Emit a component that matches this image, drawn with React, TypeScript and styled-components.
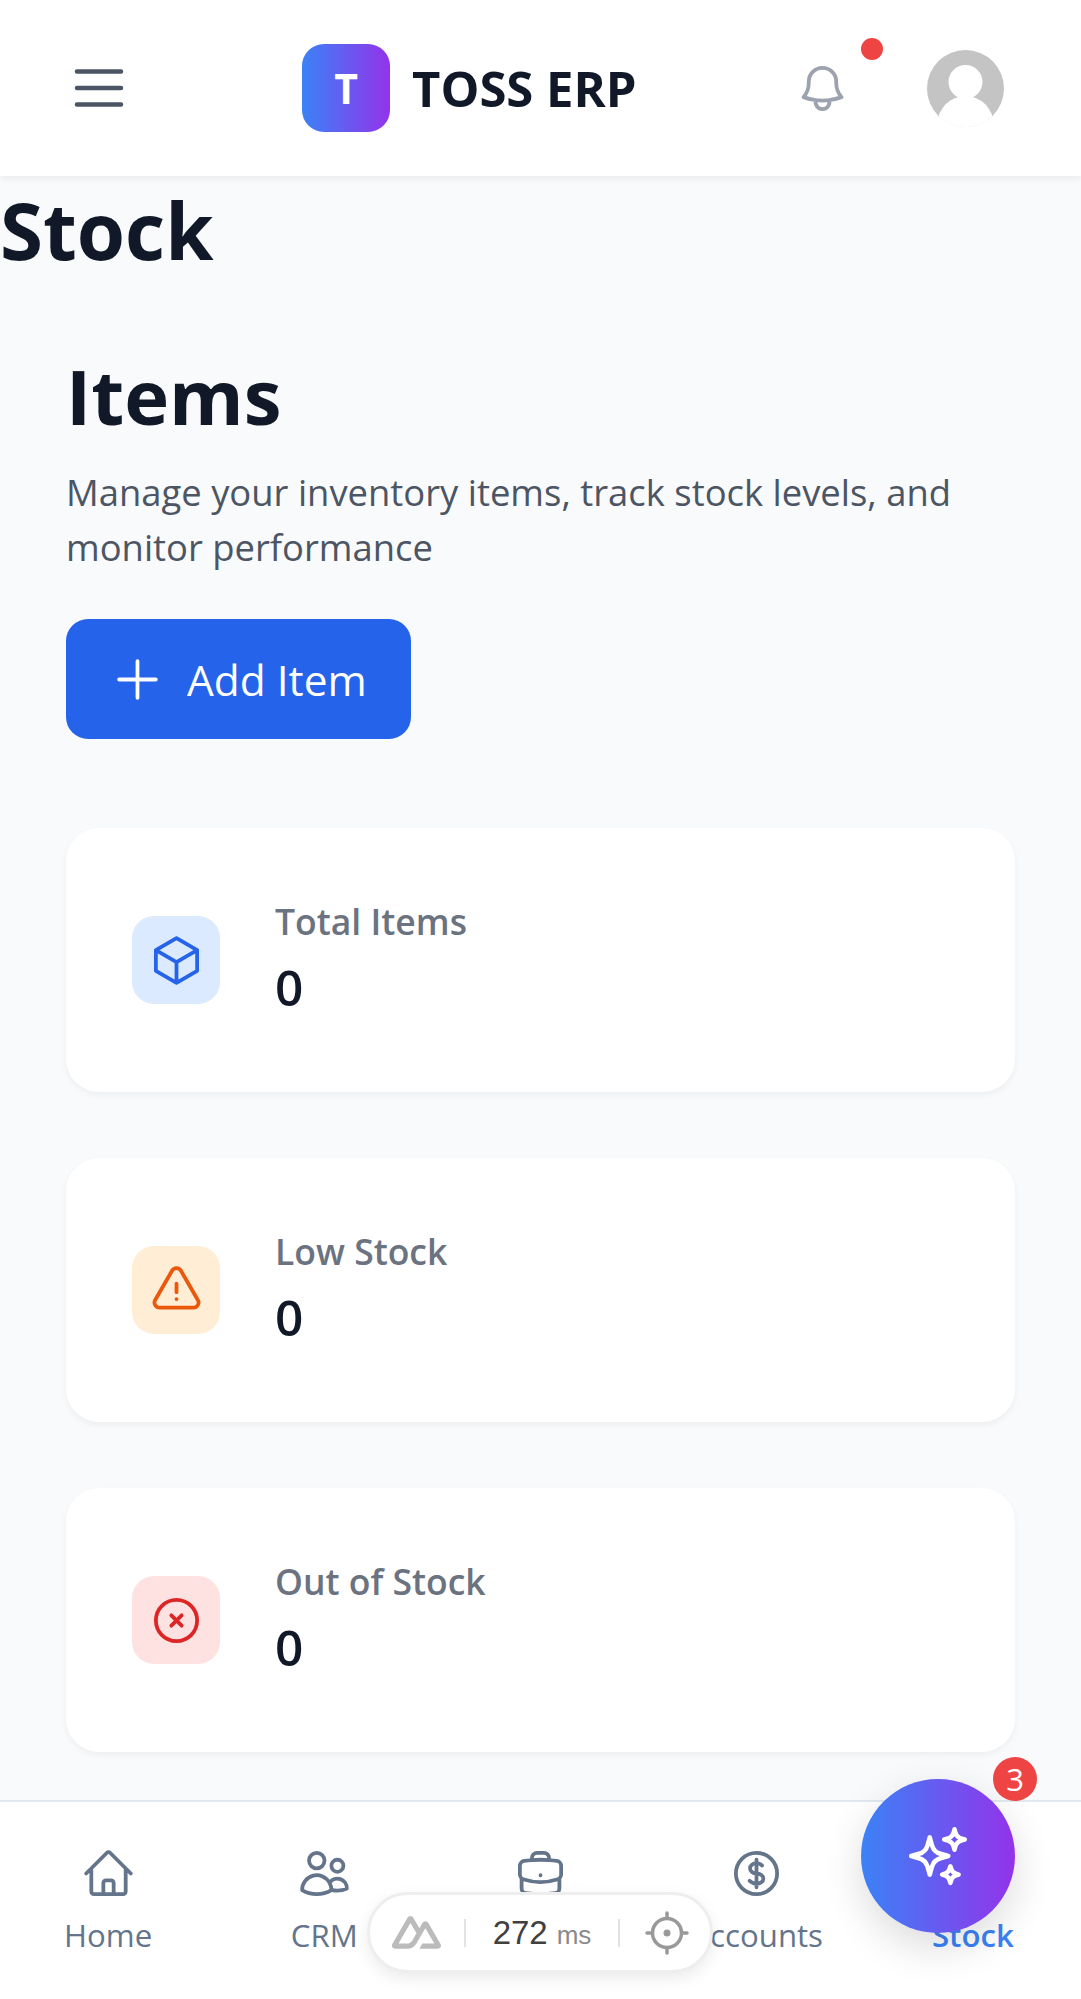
import React from 'react';
import styled, {createGlobalStyle} from 'styled-components';

const GlobalStyle = createGlobalStyle`
  html, body {
    margin: 0;
    padding: 0;
    background: #f9fafb;
  }

  * {
    box-sizing: border-box;
  }
`

const Page = styled.div`
  display: flex;
  flex-direction: column;
  height: 100vh;
  overflow: hidden;
  position: relative;
  background: #f9fafb;
  font-family: "Open Sans", "Noto Sans", sans-serif;
`

const Header = styled.header`
  display: flex;
  align-items: center;
  flex: none;
  height: 176px;
  padding: 0 77px 0 66px;
  background: #ffffff;
  box-shadow: 0 3px 6px rgba(0, 0, 0, 0.06);
  position: relative;
`

const MenuIcon = styled.svg`
  width: 66px;
  height: 66px;
  color: #4b5563;
`

const Brand = styled.div`
  display: flex;
  align-items: center;
  gap: 22px;
  margin-left: 170px;
`

const LogoBox = styled.div`
  display: flex;
  align-items: center;
  justify-content: center;
  width: 88px;
  height: 88px;
  border-radius: 22px;
  background: linear-gradient(to right, #3b82f6, #9333ea);
  color: #ffffff;
  font-size: 41px;
  font-weight: 700;
`

const BrandName = styled.span`
  font-size: 49px;
  font-weight: 700;
  color: #111827;
  white-space: nowrap;
`

const HeaderActions = styled.div`
  display: flex;
  align-items: center;
  gap: 77px;
  margin-left: auto;
`

const BellButton = styled.div`
  position: relative;
  display: flex;
  width: 55px;
  height: 55px;
  color: #9ca3af;
`

const Dot = styled.span`
  position: absolute;
  top: -23px;
  right: -33px;
  width: 22px;
  height: 22px;
  border-radius: 50%;
  background: #ef4444;
`

const Avatar = styled.svg`
  display: block;
  width: 77px;
  height: 77px;
`

const PageTitle = styled.h1`
  margin: 0;
  padding-top: 5px;
  font-size: 78px;
  line-height: 99px;
  font-weight: 700;
  color: #111827;
`

const Content = styled.main`
  flex: 1;
  min-height: 0;
  padding: 66px 66px 0;
`

const SectionTitle = styled.h2`
  margin: 0 0 20px;
  font-size: 76px;
  line-height: 99px;
  font-weight: 700;
  color: #111827;
`

const Description = styled.p`
  margin: 0 0 44px;
  font-size: 36.4px;
  line-height: 55px;
  color: #4b5563;
`

const AddButton = styled.button`
  display: flex;
  align-items: center;
  gap: 22px;
  height: 120px;
  padding: 0 44px;
  margin-bottom: 89px;
  border: 0;
  border-radius: 22px;
  background: #2563eb;
  color: #ffffff;
  font-family: inherit;
  font-size: 42.4px;
`

const CardList = styled.div`
  display: flex;
  flex-direction: column;
  gap: 66px;
`

const Card = styled.div`
  display: flex;
  align-items: center;
  gap: 55px;
  padding: 66px;
  border-radius: 33px;
  background: #ffffff;
  box-shadow: 0 3px 6px rgba(0, 0, 0, 0.05);
`

const CardIcon = styled('div')<{ $bg: string; $fg: string }>`
  display: flex;
  align-items: center;
  justify-content: center;
  flex: none;
  width: 88px;
  height: 88px;
  border-radius: 22px;
  background: ${({$bg}) => $bg};
  color: ${({$fg}) => $fg};
`

const CardLabel = styled.div`
  font-size: 35.5px;
  line-height: 55px;
  font-weight: 600;
  color: #6b7280;
`

const CardValue = styled.div`
  font-size: 49.5px;
  line-height: 77px;
  font-weight: 600;
  color: #111827;
`

const BottomNav = styled.nav`
  display: grid;
  grid-template-columns: repeat(5, 1fr);
  flex: none;
  height: 199px;
  padding-top: 44px;
  background: #ffffff;
  border-top: 2px solid #e2e8f0;
`

const NavItem = styled('div')<{ $active?: boolean }>`
  display: flex;
  flex-direction: column;
  align-items: center;
  gap: 12px;
  color: ${({$active}) => ($active ? '#3b82f6' : '#64748b')};
  font-size: 31.2px;
  line-height: 44px;
  font-weight: ${({$active}) => ($active ? 600 : 400)};
`

const NavIcon = styled.svg`
  width: 55px;
  height: 55px;
  color: #64748b;
`

const Fab = styled.div`
  position: absolute;
  right: 66px;
  bottom: 66px;
  display: flex;
  align-items: center;
  justify-content: center;
  width: 154px;
  height: 154px;
  border-radius: 50%;
  background: linear-gradient(to right, #3b82f6, #9333ea);
  color: #ffffff;
  box-shadow: 0 14px 40px rgba(0, 0, 0, 0.14);
`

const FabBadge = styled.span`
  position: absolute;
  top: -22px;
  right: -22px;
  display: flex;
  align-items: center;
  justify-content: center;
  width: 44px;
  height: 44px;
  border-radius: 50%;
  background: #ef4444;
  color: #ffffff;
  font-size: 31px;
`

const DevPill = styled.div`
  position: absolute;
  left: 367px;
  bottom: 26px;
  display: flex;
  align-items: center;
  width: 346px;
  height: 81px;
  padding: 0 22px;
  border: 3px solid #eeeeee;
  border-radius: 41px;
  background: #ffffff;
  box-shadow: 0 6px 16px rgba(0, 0, 0, 0.08);
  font-family: "Liberation Sans", Arial, sans-serif;
`

const DevLogo = styled.svg`
  flex: none;
  width: 49px;
  height: 33px;
  margin-right: 23px;
`

const DevDivider = styled.span`
  flex: none;
  width: 2px;
  height: 28px;
  background: #e2e2e2;
`

const DevMs = styled.div`
  flex: none;
  width: 152px;
  text-align: center;
  font-size: 33px;
  color: #404040;

  small {
    margin-left: 9px;
    font-size: 26px;
    color: #8a8a8a;
  }
`

const DevTarget = styled.svg`
  flex: none;
  width: 44px;
  height: 44px;
  margin-left: 25px;
`

const Outline: React.FC<{ d: string; size?: number; width?: number }> = ({d, size = 55, width = 1.65}) => (
    <svg width={size} height={size} viewBox="0 0 24 24" fill="none" stroke="currentColor" strokeWidth={width}
         strokeLinecap="round" strokeLinejoin="round">
        <path d={d}/>
    </svg>
)

const NAV_PATHS: { label: string; d: string; active?: boolean }[] = [
    {
        label: 'Home',
        d: 'M2.25 12l8.954-8.955c.44-.439 1.152-.439 1.591 0L21.75 12M4.5 9.75v10.125c0 .621.504 1.125 1.125 1.125H9.75v-4.875c0-.621.504-1.125 1.125-1.125h2.25c.621 0 1.125.504 1.125 1.125V21h4.125c.621 0 1.125-.504 1.125-1.125V9.75M8.25 21h8.25',
    },
    {
        label: 'CRM',
        d: 'M15 19.128a9.38 9.38 0 002.625.372 9.337 9.337 0 004.121-.952 4.125 4.125 0 00-7.533-2.493M15 19.128v-.003c0-1.113-.285-2.16-.786-3.07M15 19.128v.106A12.318 12.318 0 018.624 21c-2.331 0-4.512-.645-6.374-1.766l-.001-.109a6.375 6.375 0 0111.964-3.07M12 6.375a3.375 3.375 0 11-6.75 0 3.375 3.375 0 016.75 0zm8.25 2.25a2.625 2.625 0 11-5.25 0 2.625 2.625 0 015.25 0z',
    },
    {
        label: 'Business',
        d: 'M20.25 14.15v4.25c0 1.094-.787 2.036-1.872 2.18-2.087.277-4.216.42-6.378.42s-4.291-.143-6.378-.42c-1.085-.144-1.872-1.086-1.872-2.18v-4.25m16.5 0a2.18 2.18 0 00.75-1.661V8.706c0-1.081-.768-2.015-1.837-2.175a48.114 48.114 0 00-3.413-.387m4.5 8.006c-.194.165-.42.295-.673.38A23.978 23.978 0 0112 15.75c-2.648 0-5.195-.429-7.577-1.22a2.016 2.016 0 01-.673-.38m0 0A2.18 2.18 0 013 12.489V8.706c0-1.081.768-2.015 1.837-2.175a48.111 48.111 0 013.413-.387m7.5 0V5.25A2.25 2.25 0 0013.5 3h-3a2.25 2.25 0 00-2.25 2.25v.894m7.5 0a48.667 48.667 0 00-7.5 0M12 12.75h.008v.008H12v-.008z',
    },
    {
        label: 'Accounts',
        d: 'M12 6v12m-3-2.818l.879.659c1.171.879 3.07.879 4.242 0 1.172-.879 1.172-2.303 0-3.182C13.536 12.219 12.768 12 12 12c-.725 0-1.45-.22-2.003-.659-1.106-.879-1.106-2.303 0-3.182s2.9-.879 4.006 0l.415.33M21 12a9 9 0 11-18 0 9 9 0 0118 0z',
    },
    {
        label: 'Stock',
        d: 'M21 7.5l-9-5.25L3 7.5m18 0l-9 5.25m9-5.25v9l-9 5.25M3 7.5l9 5.25M3 7.5v9l9 5.25m0-9v9',
        active: true,
    },
]

const STATS = [
    {
        label: 'Total Items',
        bg: '#dbeafe',
        fg: '#2563eb',
        d: 'M21 7.5l-9-5.25L3 7.5m18 0l-9 5.25m9-5.25v9l-9 5.25M3 7.5l9 5.25M3 7.5v9l9 5.25m0-9v9',
    },
    {
        label: 'Low Stock',
        bg: '#ffedd5',
        fg: '#ea580c',
        d: 'M12 9v3.75m-9.303 3.376c-.866 1.5.217 3.374 1.948 3.374h14.71c1.73 0 2.813-1.874 1.948-3.374L13.949 3.378c-.866-1.5-3.032-1.5-3.898 0L2.697 16.126zM12 15.75h.007v.008H12v-.008z',
    },
    {
        label: 'Out of Stock',
        bg: '#fee2e2',
        fg: '#dc2626',
        d: 'M9.75 9.75l4.5 4.5m0-4.5l-4.5 4.5M21 12a9 9 0 11-18 0 9 9 0 0118 0z',
    },
]

const App: React.FC = () => {
    return (
        <Page>
            <GlobalStyle/>
            <Header>
                <MenuIcon viewBox="0 0 24 24" fill="none" stroke="currentColor" strokeWidth={1.65} strokeLinecap="round">
                    <path d="M4 6h16M4 12h16M4 18h16"/>
                </MenuIcon>
                <Brand>
                    <LogoBox>T</LogoBox>
                    <BrandName>TOSS ERP</BrandName>
                </Brand>
                <HeaderActions>
                    <BellButton>
                        <Outline d="M14.857 17.082a23.848 23.848 0 005.454-1.31A8.967 8.967 0 0118 9.75v-.7V9A6 6 0 006 9v.75a8.967 8.967 0 01-2.312 6.022c1.733.64 3.56 1.085 5.455 1.31m5.714 0a24.255 24.255 0 01-5.714 0m5.714 0a3 3 0 11-5.714 0"/>
                        <Dot/>
                    </BellButton>
                    <Avatar viewBox="0 0 77 77">
                        <defs>
                            <clipPath id="avatar-clip">
                                <circle cx="38.5" cy="38.5" r="38.5"/>
                            </clipPath>
                        </defs>
                        <circle cx="38.5" cy="38.5" r="38.5" fill="#c4c4c4"/>
                        <g clipPath="url(#avatar-clip)" fill="#ffffff">
                            <circle cx="38.5" cy="32" r="17"/>
                            <circle cx="38.5" cy="74" r="28"/>
                            <rect x="0" y="67" width="77" height="10"/>
                        </g>
                    </Avatar>
                </HeaderActions>
            </Header>

            <PageTitle>Stock</PageTitle>

            <Content>
                <SectionTitle>Items</SectionTitle>
                <Description>Manage your inventory items, track stock levels, and monitor performance</Description>
                <AddButton>
                    <Outline d="M12 4v16m8-8H4"/>
                    Add Item
                </AddButton>
                <CardList>
                    {STATS.map(stat => (
                        <Card key={stat.label}>
                            <CardIcon $bg={stat.bg} $fg={stat.fg}>
                                <Outline d={stat.d}/>
                            </CardIcon>
                            <div>
                                <CardLabel>{stat.label}</CardLabel>
                                <CardValue>0</CardValue>
                            </div>
                        </Card>
                    ))}
                </CardList>
            </Content>

            <BottomNav>
                {NAV_PATHS.map(item => (
                    <NavItem key={item.label} $active={item.active}>
                        <NavIcon viewBox="0 0 24 24" fill="none" stroke="currentColor" strokeWidth={1.65}
                                 strokeLinecap="round" strokeLinejoin="round">
                            <path d={item.d}/>
                        </NavIcon>
                        {item.label}
                    </NavItem>
                ))}
            </BottomNav>

            <DevPill>
                <DevLogo viewBox="44 115 424 283" fill="#bbbbbb">
                    <path d="M281.44 397.667H438.32C443.326 397.667 448.118 395.908 452.453 393.427C456.789 390.946 461.258 387.831 463.76 383.533C466.262 379.236 468.002 374.36 468 369.399C467.998 364.437 466.266 359.563 463.76 355.268L357.76 172.947C355.258 168.65 352.201 165.534 347.867 163.053C343.532 160.573 337.325 158.813 332.32 158.813C327.315 158.813 322.521 160.573 318.187 163.053C313.852 165.534 310.795 168.65 308.293 172.947L281.44 219.587L227.733 129.13C225.229 124.834 222.176 120.307 217.84 117.827C213.504 115.346 208.713 115 203.707 115C198.701 115 193.909 115.346 189.573 117.827C185.238 120.307 180.771 124.834 178.267 129.13L46.8267 355.268C44.3208 359.563 44.0022 364.437 44 369.399C43.9978 374.36 44.3246 379.235 46.8267 383.533C49.3288 387.83 53.7979 390.946 58.1333 393.427C62.4688 395.908 67.2603 397.667 72.2667 397.667H171.2C210.401 397.667 238.934 380.082 258.827 346.787L306.88 263.4L332.32 219.587L410.053 352.44H306.88L281.44 397.667ZM169.787 352.44H100.533L203.707 174.36L256 263.4L221.361 323.784C208.151 345.387 193.089 352.44 169.787 352.44Z"/>
                </DevLogo>
                <DevDivider/>
                <DevMs>272<small>ms</small></DevMs>
                <DevDivider/>
                <DevTarget viewBox="0 0 44 44" fill="none" stroke="#999999" strokeWidth="3.5" strokeLinecap="round">
                    <circle cx="22" cy="22" r="14.5"/>
                    <path d="M22 2v5M22 37v5M2 22h5M37 22h5"/>
                    <circle cx="22" cy="22" r="3.5" fill="#999999" stroke="none"/>
                </DevTarget>
            </DevPill>

            <Fab>
                <Outline size={66} d="M9.813 15.904L9 18.75l-.813-2.846a4.5 4.5 0 00-3.09-3.09L2.25 12l2.846-.813a4.5 4.5 0 003.09-3.09L9 5.25l.813 2.846a4.5 4.5 0 003.09 3.09L15.75 12l-2.846.813a4.5 4.5 0 00-3.09 3.09zM18.259 8.715L18 9.75l-.259-1.035a3.375 3.375 0 00-2.455-2.456L14.25 6l1.036-.259a3.375 3.375 0 002.455-2.456L18 2.25l.259 1.035a3.375 3.375 0 002.456 2.456L21.75 6l-1.035.259a3.375 3.375 0 00-2.456 2.456zM16.894 20.567L16.5 21.75l-.394-1.183a2.25 2.25 0 00-1.423-1.423L13.5 18.75l1.183-.394a2.25 2.25 0 001.423-1.423l.394-1.183.394 1.183a2.25 2.25 0 001.423 1.423l1.183.394-1.183.394a2.25 2.25 0 00-1.423 1.423z"/>
                <FabBadge>3</FabBadge>
            </Fab>
        </Page>
    );
};

export default App;
